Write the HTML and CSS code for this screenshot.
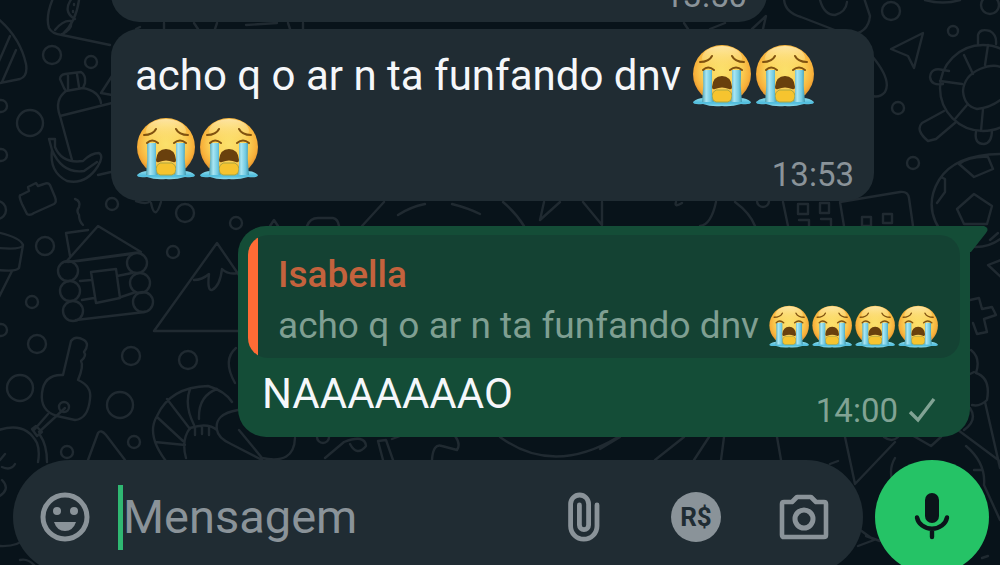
FILE: index.html
```html
<!DOCTYPE html>
<html lang="pt-BR">
<head>
<meta charset="utf-8">
<meta name="viewport" content="width=device-width, initial-scale=1">
<title>Conversa</title>
<link rel="stylesheet" href="styles.css">
</head>
<body>
<svg class="defs" aria-hidden="true">
  <defs>
    <radialGradient id="face" cx="50%" cy="45%" r="56%">
      <stop offset="0" stop-color="#fbe16c"/>
      <stop offset=".6" stop-color="#fbcf55"/>
      <stop offset=".85" stop-color="#f7b03a"/>
      <stop offset="1" stop-color="#e08a28"/>
    </radialGradient>
    <linearGradient id="shine" x1="0" y1="0" x2="0" y2="1">
      <stop offset="0" stop-color="#fff3c4" stop-opacity=".75"/>
      <stop offset="1" stop-color="#fde27a" stop-opacity="0"/>
    </linearGradient>
    <linearGradient id="tear" x1="0" y1="0" x2="1" y2="0">
      <stop offset="0" stop-color="#4a9fb0"/>
      <stop offset=".35" stop-color="#a9e6f3"/>
      <stop offset=".7" stop-color="#74cbe2"/>
      <stop offset="1" stop-color="#3f98ae"/>
    </linearGradient>
    <linearGradient id="pool" x1="0" y1="0" x2="0" y2="1">
      <stop offset="0" stop-color="#8edcec"/>
      <stop offset=".6" stop-color="#4dbbdc"/>
      <stop offset="1" stop-color="#8edcec"/>
    </linearGradient>
    <symbol id="cry" viewBox="0 0 63 63">
      <circle cx="31" cy="30" r="29" fill="url(#face)"/>
      <ellipse cx="31" cy="14" rx="20" ry="12" fill="url(#shine)"/>
      <path d="M2 58Q6 54 13 54L20 57H42L49 54Q56 54 60 58Q60 61 50 60Q40 63 31 62Q20 63 12 60Q2 61 2 58Z" fill="url(#pool)"/>
      <path d="M21 52Q21 48 25 46H37Q41 48 41 52Q41 57 37 58H25Q21 57 21 52Z" fill="#f6c42f" stroke="#a9a541" stroke-width="1"/>
      <path d="M12 26H21V50Q21 56 23 58H11Q13 42 12 26Z" fill="url(#tear)"/>
      <path d="M41 26H50Q49 42 51 58H39Q41 56 41 50Z" fill="url(#tear)"/>
      <path d="M21 43Q22 32 31 32Q40 32 41 43Q41 46 38 45Q31 42 24 45Q21 46 21 43Z" fill="#69400d"/>
      <g fill="none" stroke="#805210" stroke-width="2" stroke-linecap="round">
        <path d="M9 18Q18 18 21 12M41 12Q44 18 53 18"/>
        <path d="M12 26Q17 21 23 26M39 26Q45 21 51 26"/>
      </g>
    </symbol>
  </defs>
</svg>

<main class="chat">
  <svg class="doodles" viewBox="0 0 1000 565" preserveAspectRatio="xMidYMid slice" aria-hidden="true">
    <g fill="none" stroke="#202a31" stroke-width="2.4" stroke-linecap="round" stroke-linejoin="round">
      <!-- bubbles -->
      <circle cx="52" cy="55" r="9"/><circle cx="91" cy="62" r="6"/><circle cx="30" cy="123" r="13"/>
      <circle cx="1" cy="106" r="6"/><circle cx="1" cy="155" r="6"/><circle cx="-3" cy="210" r="9"/>
      <circle cx="112" cy="204" r="6"/><circle cx="185" cy="213" r="9"/><circle cx="236" cy="223" r="6"/>
      <circle cx="45" cy="246" r="9"/><circle cx="173" cy="252" r="6"/><circle cx="32" cy="302" r="6"/>
      <circle cx="1" cy="330" r="6"/><circle cx="37" cy="344" r="9"/><circle cx="131" cy="356" r="9"/>
      <circle cx="188" cy="360" r="9"/><circle cx="20" cy="388" r="13"/><circle cx="120" cy="405" r="13"/>
      <circle cx="134" cy="442" r="6"/><circle cx="67" cy="452" r="6"/><circle cx="891" cy="11" r="9"/>
      <circle cx="990" cy="5" r="9"/><circle cx="953" cy="31" r="5"/><circle cx="898" cy="108" r="6"/>
      <circle cx="913" cy="163" r="6"/><circle cx="763" cy="201" r="6"/><circle cx="323" cy="437" r="6"/>
      <!-- party hat and corn -->
      <path d="M-5 16Q20 36 26 64Q28 76 20 79L0 83M10 36L-3 66M16 50L2 82"/>
      <path d="M54 -4Q45 16 49 28Q52 34 62 35Q76 22 79 0M62 35L110 45M72 -2Q62 12 75 19M55 30Q63 20 71 21Q73 29 62 34M74 4v1M73 11v1"/>
      <!-- bottle and banana -->
      <path d="M64 88L60 79Q60 75 65 74L81 72Q86 75 85 83L83 88L66 91ZM68 76V89M77 74L79 87M66 91Q54 100 60 116L72 160M83 88Q99 91 101 103M60 116L112 103M101 93L112 76M101 93L112 95"/>
      <path d="M49 139L55 139L55 147Q62 164 83 161Q91 153 99 153Q104 156 98 166Q86 185 67 181Q49 172 52 150ZM52 150Q62 174 84 171L97 162M98 175L111 172"/>
      <path d="M21 195Q18 195 22 204L27 214Q30 216 34 213L54 204Q57 202 55 197L50 185Q48 182 44 184L38 186L36 183L28 187L29 191ZM75 199Q81 201 79 207Q76 211 79 215Q79 221 83 225"/>
      <path d="M136 201Q147 205 150 201M151 203Q155 222 161 202"/>
      <!-- cabin -->
      <path d="M66 262L98 226L141 252L68 262M70 256L66 233L88 230M78 261L131 254M80 281L91 280M117 276L132 273M82 300L94 298M121 297L136 292M76 320L145 312M91 272L116 269L120 298L96 303Z"/>
      <circle cx="68" cy="271" r="10"/><circle cx="70" cy="291" r="10"/><circle cx="73" cy="311" r="10"/>
      <circle cx="137" cy="263" r="10"/><circle cx="140" cy="283" r="10"/><circle cx="143" cy="302" r="10"/>
      <!-- cup -->
      <path d="M-4 232Q20 237 23 245Q22 250 -2 248M23 245L19 268Q16 272 -2 270M12 271L-2 299"/>
      <!-- mountain -->
      <path d="M154 331L217 243L256 300M154 331H245M194 280Q202 280 209 274Q207 291 212 290Q220 286 222 269Q228 275 238 273M270 226L274 220L278 226"/>
      <!-- key and ball -->
      <path d="M63 375L71 341Q75 335 84 340Q90 344 84 352Q87 356 81 361Q84 366 78 380Q92 386 90 399Q88 419 75 420L57 416Q40 411 42 393Q44 374 63 375Z"/>
      <circle cx="64" cy="407" r="5"/>
      <path d="M48 414L34 430M65 408L39 432M32 429L36 426L42 432L37 436Z"/>
      <path d="M-4 431Q25 420 37 443Q40 451 38 462M40 435Q47 445 47 462M88 460L98 433Q101 429 106 435L125 460"/>
      <path d="M0 460l5 -6M2 467q9 4 13 -3M-4 498Q12 490 2 480M0 546Q18 547 29 536M20 560Q28 558 35 566"/>
      <!-- shrimp -->
      <path d="M169 465Q145 436 157 416Q170 387 208 386Q225 391 232 402M186 458Q181 440 190 428Q208 422 217 430M157 417L183 441M167 399L190 429M190 389Q184 405 194 425M217 389Q198 396 199 419M155 442L185 445M217 430Q214 414 238 410M217 430Q218 438 231 444L262 460M239 430L262 458Q294 465 295 438M195 427v8M202 426v8M209 427v8"/>
      <path d="M236 348Q222 360 235 383"/>
      <!-- shapes in the gaps between rows -->
      <path d="M325 458L344 442Q365 434 366 446Q357 457 350 444M378 441L386 440L393 460M378 441L383 460M392 439L400 436M432 460Q433 443 442 446L457 450Q461 444 455 436M500 437Q553 476 618 437M600 449L620 437M655 460L684 437M694 460L709 437M721 460L724 437M777 437L781 460M845 437L855 484L895 442M884 437Q892 443 898 437M910 434L931 446L941 437M830 464L838 461M895 458Q889 468 892 480"/>
      <path d="M307 226Q310 218 318 218H333Q338 219 339 226M362 226L384 202M398 215Q410 207 425 204M452 204Q468 208 480 214M503 202Q516 213 524 226M544 202L540 220L560 202M583 202L602 225V202M676 202Q674 208 682 203M716 202Q711 225 700 226M735 202Q750 213 755 226"/>
      <path d="M136 29L140 27M164 23V29M194 23L198 29M217 23L215 29M246 25L277 23M288 23L290 29M303 23V29M684 23L688 29M710 29L725 23M752 29L766 16L763 29"/>
      <!-- calendar and building -->
      <path d="M783 202L788 226M844 226L840 202L900 192Q908 191 909 198L913 226M798 204h10v10h-10zM820 203h9v10h-9zM799 220h10v6M821 219h10v6M862 217h9v9h-9zM883 214h9v9h-9z"/>
      <!-- cloud, dart, turtle -->
      <path d="M784 -2Q784 12 801 17L845 34Q868 36 870 16L864 -2M820 0Q824 15 835 15Q846 12 847 2M872 56Q892 80 885 92Q880 98 872 96M925 0Q943 5 960 0"/>
      <path d="M891 49L923 33L914 68L908 56Z"/>
      <circle cx="983" cy="88" r="43"/>
      <path d="M963 91Q964 76 980 69Q994 63 1003 68M963 91Q964 106 977 109Q991 108 1003 98M988 45L985 65M964 55L973 74M940 81L962 84M955 119L967 105M981 131L983 109M978 45V35Q980 28 990 31Q997 35 996 44M943 84Q931 86 930 77Q931 67 943 70L949 71M944 111L922 123Q915 130 928 141L936 139L956 122M976 132Q974 144 984 144Q992 143 992 130"/>
      <!-- football -->
      <path d="M1003 154Q955 154 939 180Q921 210 947 239Q980 256 1003 237M959 164L974 177L993 169L988 157Q970 156 959 164ZM957 209L974 194L992 206L987 224H964ZM937 203L945 192V179L941 177M990 240L998 233"/>
      <path d="M1001 260L988 265L1002 278"/>
      <path d="M970 300L979 298L982 309L992 307L996 315L984 319L987 332L977 334L973 323"/>
      <!-- ice cream -->
      <path d="M971 350Q981 358 976 373Q991 378 987 400Q980 407 972 405M974 372L970 374M985 402L1000 468M958 430L1001 462M970 408Q978 420 964 430M966 446Q986 463 984 485L1000 520M974 470H982"/>
      <path d="M856 527L874 540L858 546M866 536L880 541M982 558L988 556"/>
    </g>
  </svg>

  <section class="messages" aria-label="Mensagens">
    <article class="bubble bubble-in bubble-short">
      <time class="meta">13:50</time>
    </article>

    <article class="bubble bubble-in bubble-wide">
      <p class="text">acho q o ar n ta funfando dnv <span class="nobr"><svg class="emoji" role="img" aria-label="😭"><use href="#cry"/></svg><svg class="emoji" role="img" aria-label="😭"><use href="#cry"/></svg></span> <span class="nobr"><svg class="emoji" role="img" aria-label="😭"><use href="#cry"/></svg><svg class="emoji" role="img" aria-label="😭"><use href="#cry"/></svg></span></p>
      <time class="meta">13:53</time>
    </article>

    <article class="bubble bubble-out">
      <svg class="tail" viewBox="0 0 30 30" aria-hidden="true"><path d="M0 0H14Q20 2 16 7L1 26H0Z" fill="#144d37"/></svg>
      <blockquote class="quote">
        <cite class="quote-name">Isabella</cite>
        <p class="quote-text">acho q o ar n ta funfando dnv <span class="nobr"><svg class="emoji" role="img" aria-label="😭"><use href="#cry"/></svg><svg class="emoji" role="img" aria-label="😭"><use href="#cry"/></svg><svg class="emoji" role="img" aria-label="😭"><use href="#cry"/></svg><svg class="emoji" role="img" aria-label="😭"><use href="#cry"/></svg></span></p>
      </blockquote>
      <div class="reply">
        <p class="reply-text">NAAAAAAAO</p>
        <span class="meta"><time>14:00</time>
          <svg class="check" viewBox="0 0 28 28" role="img" aria-label="Enviada"><path d="M2 15L10 23L26 2" fill="none" stroke="currentColor" stroke-width="3.4"/></svg>
        </span>
      </div>
    </article>
  </section>

  <form class="composer">
    <div class="field">
      <button class="icon-btn" type="button" aria-label="Emoji">
        <svg class="icon" viewBox="0 0 50 50"><circle cx="25" cy="25" r="22" fill="none" stroke="currentColor" stroke-width="5"/><circle cx="17" cy="19" r="4" fill="currentColor"/><circle cx="34" cy="19" r="4" fill="currentColor"/><path d="M14 30H36Q33 39 25 39Q17 39 14 30Z" fill="currentColor"/></svg>
      </button>
      <span class="caret"></span>
      <input class="input" type="text" placeholder="Mensagem" aria-label="Mensagem">
      <div class="actions">
        <button class="icon-btn" type="button" aria-label="Anexar">
          <svg class="icon" viewBox="0 0 50 50"><path d="M34 13V34A13.2 13.2 0 0 1 7.600 34V12A9 9 0 0 1 25.600 12V33A4.600 4.600 0 0 1 16.400 33V13" fill="none" stroke="currentColor" stroke-width="4.800" stroke-linecap="round"/></svg>
        </button>
        <button class="icon-btn pay" type="button" aria-label="Pagamento">R$</button>
        <button class="icon-btn" type="button" aria-label="Câmera">
          <svg class="icon" viewBox="0 0 50 50"><path d="M5 10H13L18 5H32L37 10H45Q47 10 47 12V43Q47 45 45 45H5Q3 45 3 43V12Q3 10 5 10Z" fill="none" stroke="currentColor" stroke-width="4.600" stroke-linejoin="round"/><circle cx="25" cy="27" r="9" fill="none" stroke="currentColor" stroke-width="5"/></svg>
        </button>
      </div>
    </div>
    <button class="mic" type="button" aria-label="Gravar áudio">
      <svg class="icon" viewBox="0 0 50 50"><rect x="18" y="1" width="14" height="30" rx="7" fill="#0b141a"/><path d="M10 25.500A15.200 13.500 0 0 0 40 25.500M25 39V45" fill="none" stroke="#0b141a" stroke-width="4.400" stroke-linecap="round"/></svg>
    </button>
  </form>
</main>
</body>
</html>
```
FILE: styles.css
```css
* {
  box-sizing: border-box;
}

body {
  margin: 0;
  background: #08131a;
  color: #f5f7fa;
  font-family: Roboto, "Noto Sans", sans-serif;
}

p,
blockquote {
  margin: 0;
}

button {
  border: 0;
  padding: 0;
  background: none;
  color: inherit;
  font: inherit;
}

.defs {
  position: absolute;
  width: 0;
  height: 0;
}

.chat {
  position: relative;
  display: flex;
  flex-direction: column;
  height: 100vh;
  overflow: hidden;
}

.doodles {
  position: absolute;
  inset: 0;
  width: 100%;
  height: 100%;
}

.messages {
  position: relative;
  flex: 1;
  min-height: 0;
  display: flex;
  flex-direction: column;
  justify-content: flex-end;
  padding: 0 30px 23px 111px;
}

.bubble {
  flex: none;
  border-radius: 28px;
}

.bubble-in {
  align-self: flex-start;
  display: grid;
  background: #202c33;
}

.bubble-in > * {
  grid-area: 1 / 1;
}

.bubble-short {
  width: 656px;
  max-width: 100%;
  height: 96px;
  margin-bottom: 7px;
  padding: 8px 20px;
}

.bubble-wide {
  width: 763px;
  max-width: 100%;
  margin-bottom: 25px;
  padding: 10px 20px 8px 24px;
}

.text {
  padding-bottom: 8px;
  font-size: 42px;
  line-height: 73px;
}

.nobr {
  white-space: nowrap;
}

.emoji {
  width: 63px;
  height: 63px;
  vertical-align: -17px;
}

.meta {
  display: flex;
  align-items: center;
  gap: 10px;
  align-self: end;
  justify-self: end;
  color: #8a9399;
  font-size: 33px;
  line-height: 37px;
}

.bubble-out {
  position: relative;
  align-self: flex-end;
  width: 732px;
  max-width: 100%;
  padding: 9px 10px 8px;
  border-top-right-radius: 0;
  background: #144d37;
}

.tail {
  position: absolute;
  top: 0;
  left: 100%;
  width: 30px;
  height: 30px;
}

.quote {
  padding: 14px 20px 7px 30px;
  border-radius: 20px;
  background: linear-gradient(to right, #ff6b35 10px, #144233 10px);
}

.quote-name {
  display: block;
  color: #c4623d;
  font-size: 37px;
  font-style: normal;
  font-weight: 500;
  line-height: 51px;
}

.quote-text {
  color: #7f9f92;
  font-size: 37px;
  line-height: 51px;
  white-space: nowrap;
}

.quote-text .emoji {
  width: 43px;
  height: 43px;
  vertical-align: -10px;
}

.reply {
  display: flex;
  justify-content: space-between;
  padding: 0 24px 0 14px;
}

.reply-text {
  font-size: 42px;
  line-height: 71px;
}

.bubble-out .meta {
  color: #81a394;
}

.check {
  width: 28px;
  height: 28px;
}

.composer {
  position: relative;
  flex: none;
  display: flex;
  gap: 12px;
  margin-bottom: -9px;
  padding: 0 11px 0 13px;
}

.field {
  flex: 1;
  min-width: 0;
  display: flex;
  align-items: center;
  height: 114px;
  padding: 0 34px 0 27px;
  border-radius: 57px;
  background: #202c33;
  color: #8a9399;
}

.icon-btn {
  flex: none;
  width: 50px;
  height: 50px;
}

.icon {
  display: block;
  width: 50px;
  height: 50px;
}

.caret {
  flex: none;
  width: 5px;
  height: 65px;
  margin-left: 28px;
  background: #2fb872;
}

.input {
  flex: 1;
  min-width: 0;
  border: 0;
  padding: 0;
  outline: 0;
  background: none;
  color: #f5f7fa;
  font-family: inherit;
  font-size: 47px;
  line-height: 56px;
}

.input::placeholder {
  color: #8a9399;
  opacity: 1;
}

.actions {
  flex: none;
  display: flex;
  gap: 58px;
}

.pay {
  border-radius: 50%;
  background: #8a9399;
  color: #202c33;
  font-size: 26px;
  font-weight: 700;
}

.mic {
  flex: none;
  display: grid;
  place-items: center;
  width: 114px;
  height: 114px;
  border-radius: 50%;
  background: #25c366;
}
```
